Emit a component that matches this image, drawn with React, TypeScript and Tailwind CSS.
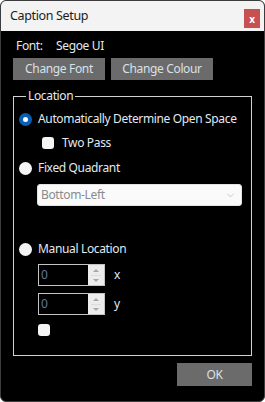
import { ChevronDown } from "lucide-react";

const txt = "text-[#e3e9f0]";

function Radio({ checked, label }: { checked?: boolean; label: string }) {
  return (
    <div className="flex items-center h-[16px]">
      {checked ? (
        <span className="w-[13px] h-[13px] rounded-full bg-[#0a5fb4] flex items-center justify-center">
          <span className="w-[5px] h-[5px] rounded-full bg-white" />
        </span>
      ) : (
        <span className="w-[13px] h-[13px] rounded-full bg-[#f4f4f4]" />
      )}
      <span className={`ml-[6px] ${txt}`}>{label}</span>
    </div>
  );
}

function Check({ label }: { label?: string }) {
  return (
    <div className="flex items-center h-[16px]">
      <span className="w-[12px] h-[12px] rounded-[3px] bg-[#f4f4f4]" />
      {label && <span className={`ml-[8px] ${txt}`}>{label}</span>}
    </div>
  );
}

function NumBox({ axis }: { axis: string }) {
  return (
    <div className="flex items-center">
      <div className="w-[67px] h-[22px] border border-[#c4c4c4] bg-black flex">
        <span className="flex-1 pl-[2px] leading-[20px] text-[#60789a]">0</span>
        <div className="w-[16px] h-full bg-[#ececec] flex flex-col items-center justify-center gap-[3px]">
          <span className="w-0 h-0 border-l-[3px] border-r-[3px] border-b-[3px] border-l-transparent border-r-transparent border-b-[#a8a8a8]" />
          <span className="w-[10px] h-px bg-[#dcdcdc]" />
          <span className="w-0 h-0 border-l-[3px] border-r-[3px] border-t-[3px] border-l-transparent border-r-transparent border-t-[#a8a8a8]" />
        </div>
      </div>
      <span className={`ml-[9px] ${txt}`}>{axis}</span>
    </div>
  );
}

export default function App() {
  return (
    <div
      className="w-[265px] h-[402px] bg-black border border-[#3c3c3c] rounded-[6px] overflow-hidden flex flex-col text-[12px] leading-[16px] tracking-[-0.35px]"
      style={{ fontFamily: '"Noto Sans", "Open Sans", sans-serif' }}
    >
      {/* title bar */}
      <div className="h-[30px] bg-[#f3f3f3] flex items-center pl-[9px] pr-[4px] shrink-0">
        <span className="flex-1 text-[#1c1c1c] text-[12.5px]">Caption Setup</span>
        <span className="w-[16px] h-[19px] mt-[5px] bg-[#c75050] text-white text-[10px] font-bold flex items-center justify-center">x</span>
      </div>

      {/* body */}
      <div className="flex flex-col px-[12px]">
        <div className={`flex mt-[7px] pl-[3px] ${txt}`}>
          <span className="w-[40px]">Font:</span>
          <span>Segoe UI</span>
        </div>
        <div className="flex gap-[6px] mt-[4px]">
          <button className="w-[92px] h-[22px] bg-[#6b6b6b] text-[#d9e0e8]">Change Font</button>
          <button className="w-[102px] h-[22px] bg-[#6b6b6b] text-[#d9e0e8]">Change Colour</button>
        </div>

        <fieldset className="mt-[8px] h-[268px] border border-[#d2d2d2] pl-[5px]">
          <legend className={`ml-[7px] px-[2px] ${txt}`}>Location</legend>
          <div className="flex flex-col mt-[7px]">
            <Radio checked label="Automatically Determine Open Space" />
            <div className="pl-[23px] mt-[8px]">
              <Check label="Two Pass" />
            </div>
            <div className="mt-[9px]">
              <Radio label="Fixed Quadrant" />
            </div>
            <div className="pl-[18px] mt-[8px]">
              <div className="w-[205px] h-[22px] bg-[#fafafa] border border-[#e2e2e2] rounded-[3px] flex items-center pl-[3px] pr-[5px]">
                <span className="flex-1 text-[#8a8a8a]">Bottom-Left</span>
                <ChevronDown size={11} strokeWidth={1.2} color="#a0a0a0" />
              </div>
            </div>
            <div className="mt-[35px]">
              <Radio label="Manual Location" />
            </div>
            <div className="pl-[19px] mt-[7px] flex flex-col gap-[7px]">
              <NumBox axis="x" />
              <NumBox axis="y" />
              <Check />
            </div>
          </div>
        </fieldset>

        <div className="flex justify-end mt-[7px]">
          <button className="w-[75px] h-[23px] bg-[#6b6b6b] text-[#d9e0e8]">OK</button>
        </div>
      </div>
    </div>
  );
}
